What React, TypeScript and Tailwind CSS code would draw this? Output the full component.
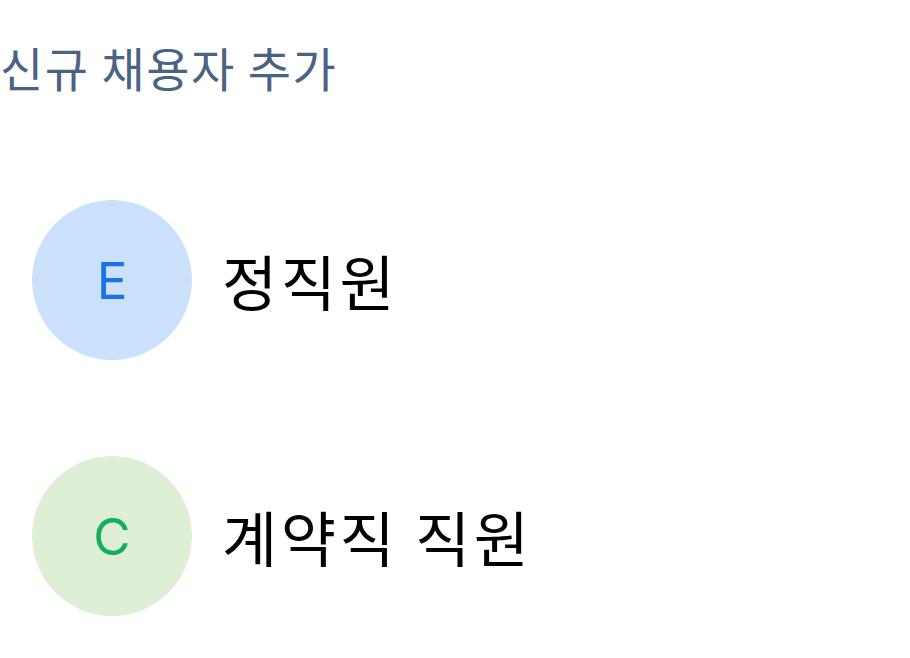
export default function App() {
  const rows = [
    { letter: 'E', label: '정직원', bg: 'bg-[#cbe0fb]', fg: 'text-[#1a73e8]' },
    { letter: 'C', label: '계약직 직원', bg: 'bg-[#dfefd6]', fg: 'text-[#12b05a]' },
  ]
  return (
    <div
      className="w-[910px] h-[658px] bg-white overflow-hidden"
      style={{ fontFamily: '"Noto Sans CJK KR", "Noto Sans", sans-serif' }}
    >
      <h1 className="pt-[37px] text-[47px] leading-[60px] tracking-[1.5px] font-normal text-[#4a6382]">
        신규 채용자 추가
      </h1>
      <div className="flex flex-col gap-[96px] pl-[32px] pt-[103px]">
        {rows.map((r) => (
          <div key={r.letter} className="flex items-center gap-[30px]">
            <div
              className={`w-[160px] h-[160px] rounded-full flex items-center justify-center ${r.bg}`}
            >
              <span
                className={`text-[51px] leading-none font-normal ${r.fg}`}
                style={{ fontFamily: 'Inter, sans-serif' }}
              >
                {r.letter}
              </span>
            </div>
            <span className="text-[60px] leading-none tracking-[3.5px] text-black">{r.label}</span>
          </div>
        ))}
      </div>
    </div>
  )
}
